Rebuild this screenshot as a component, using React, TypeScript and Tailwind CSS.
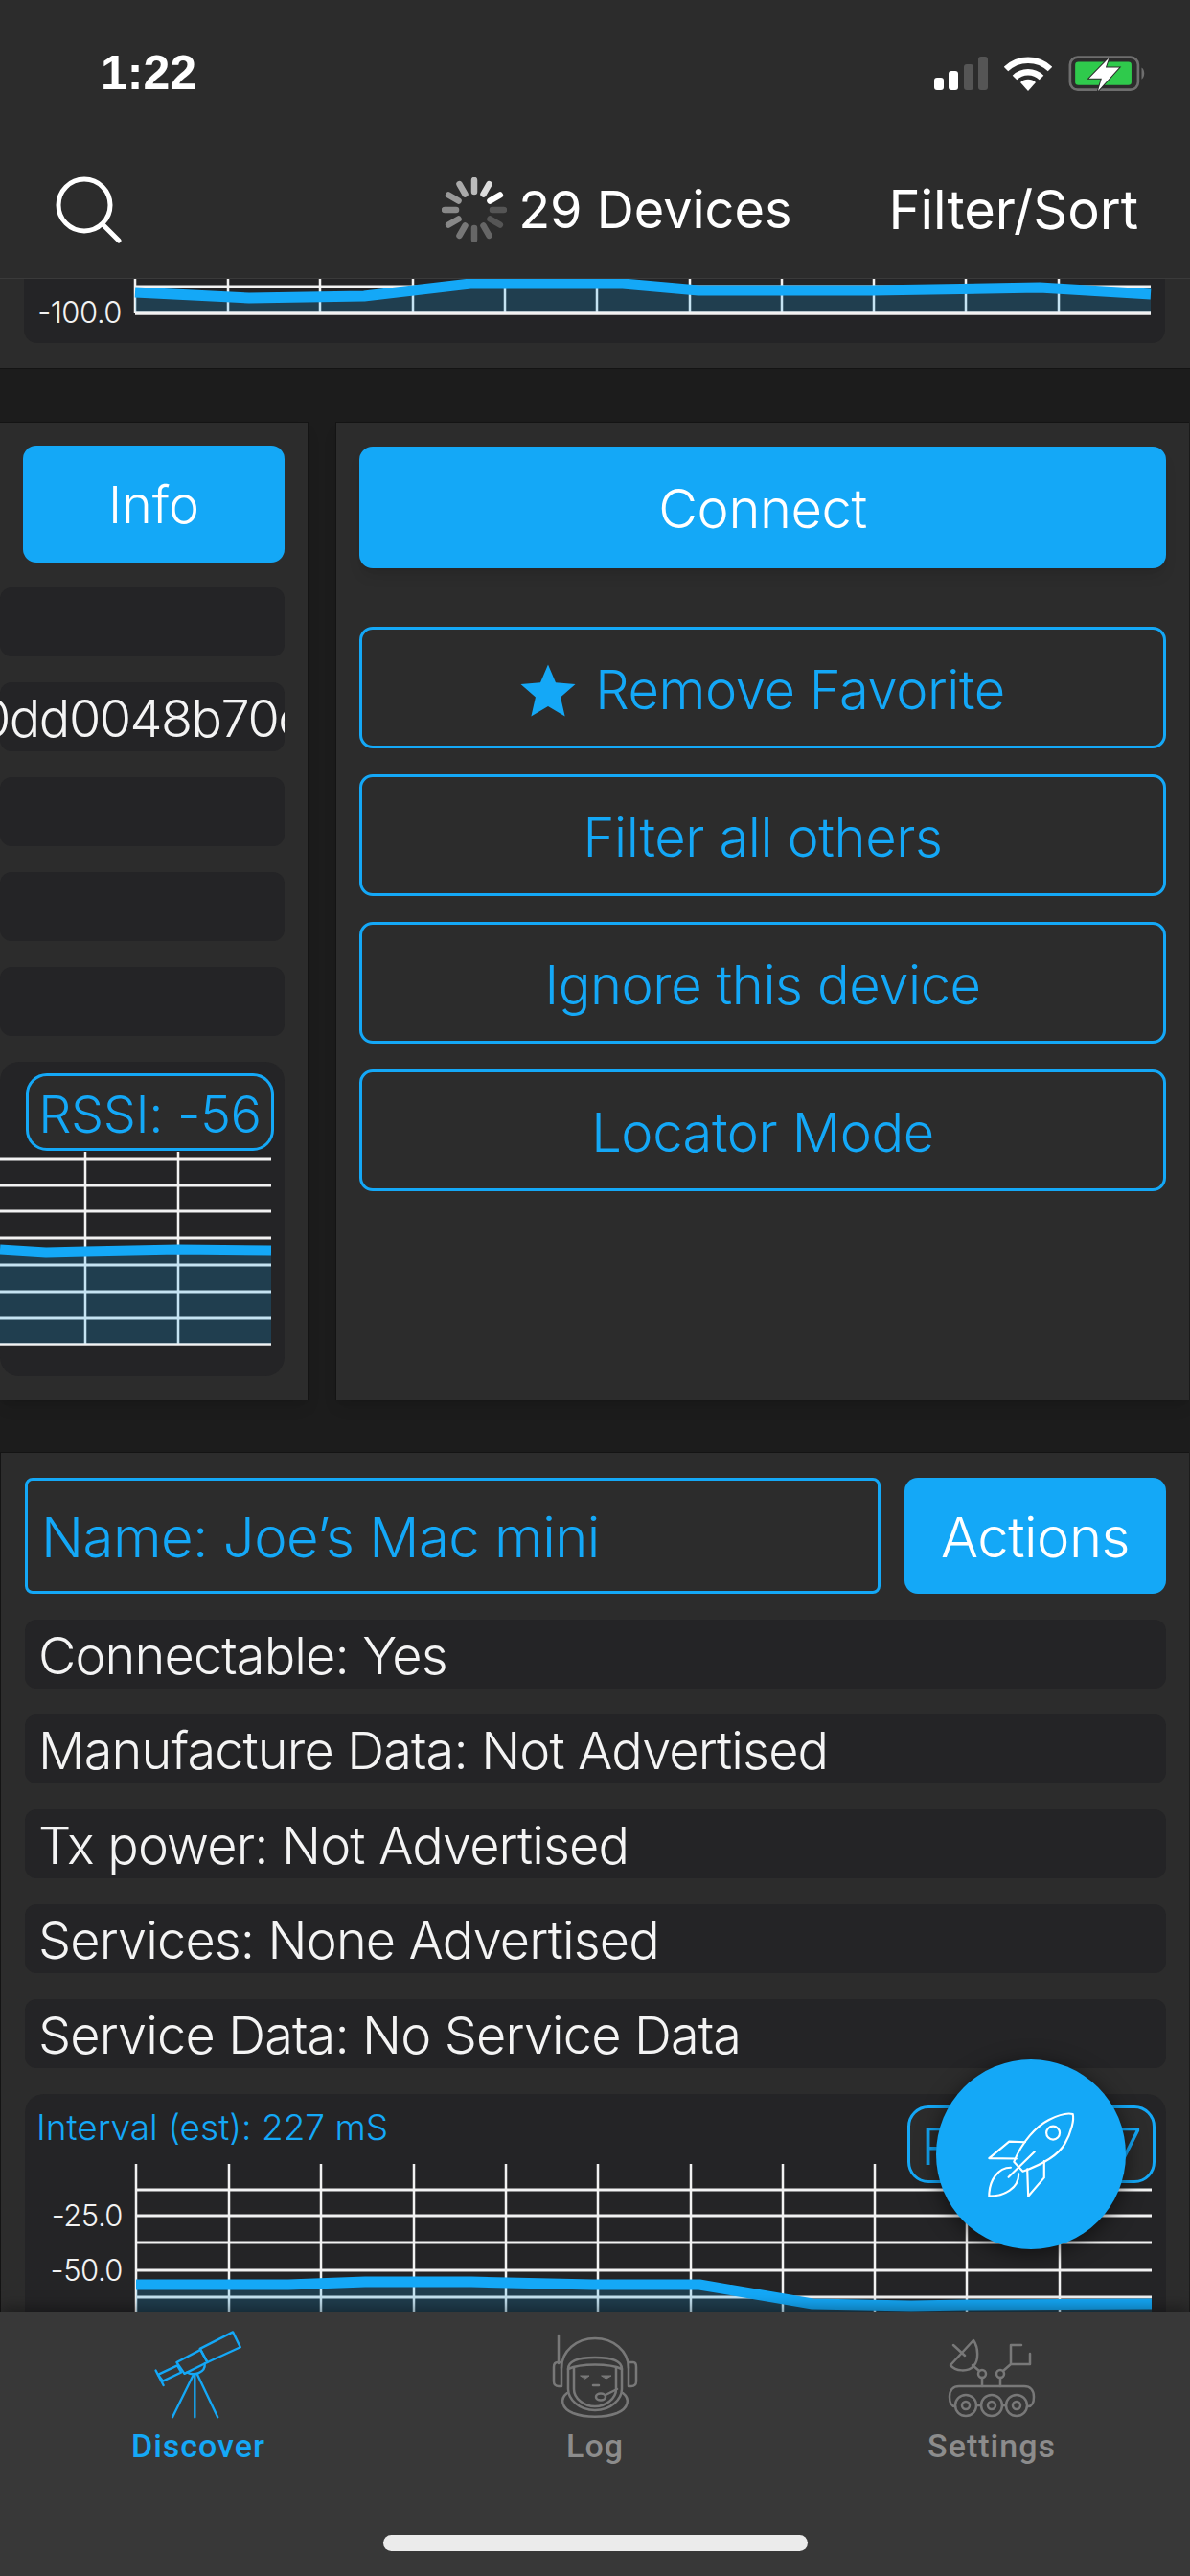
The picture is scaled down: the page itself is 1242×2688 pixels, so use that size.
import React from 'react';

type Pt = [number, number];

const VLINES = [141, 238, 334, 431, 527, 623, 720, 816, 912, 1008, 1105];

function Chart({ box, xs, ys, left, right, top, base, line, labels }: {
    box: [number, number, number, number];
    xs: number[];
    ys: number[];
    left: number;
    right: number;
    top: number;
    base: number;
    line: Pt[];
    labels?: { y: number; text: string }[];
}) {
    const pts = line.map((p) => p.join(',')).join(' ');
    const area = `${line[0][0]},${base} ${pts} ${line[line.length - 1][0]},${base}`;
    return (
        <svg className="block w-full" viewBox={box.join(' ')} style={{ height: box[3] }}>
            <g stroke="#f2f2f2" strokeWidth="3">
                {xs.map((x) => <line key={x} x1={x} x2={x} y1={top} y2={base} strokeWidth="2.5" />)}
                {ys.map((y) => <line key={y} x1={left} x2={right} y1={y} y2={y} />)}
            </g>
            <polygon points={area} fill="#14a8f7" fillOpacity="0.2" />
            <line x1={left} x2={right} y1={base} y2={base} stroke="#f2f2f2" strokeWidth="3" />
            <polyline points={pts} fill="none" stroke="#14a8f7" strokeWidth="11" strokeLinejoin="round" />
            {labels?.map((l) => (
                <text key={l.text} x="127" y={l.y + 11} textAnchor="end" fill="#f2f2f2" fontSize="31" fontFamily="Inter, sans-serif" fontWeight="300" letterSpacing="-0.5">{l.text}</text>
            ))}
        </svg>
    );
}

function Row({ children }: { children?: React.ReactNode }) {
    return (
        <div className="flex h-[72px] items-center overflow-hidden rounded-[12px] bg-[#242426] pt-[3px] pl-[14px] whitespace-nowrap text-[#f4f4f4]">
            {children}
        </div>
    );
}

function OutlineButton({ children }: { children: React.ReactNode }) {
    return (
        <div className="flex h-[127px] items-center justify-center rounded-[14px] border-[3px] border-[#14a8f7] pt-[5px] text-[#14a8f7]">
            {children}
        </div>
    );
}

function Pill({ children }: { children: React.ReactNode }) {
    return (
        <div className="absolute top-[12px] right-[11px] flex h-[81px] w-[259px] items-center justify-center rounded-[22px] border-[3px] border-[#14a8f7] bg-[#2c2c2c] pt-[3px] text-[54px] tracking-[-0.4px] whitespace-nowrap text-[#14a8f7]">
            {children}
        </div>
    );
}

function Spinner() {
    const shades = ['#bbb', '#ddd', '#fff', '#555', '#555', '#666', '#666', '#777', '#888', '#888', '#999', '#aaa'];
    return (
        <svg width="68" height="68" viewBox="-34 -34 68 68">
            {shades.map((c, i) => (
                <line key={i} x1="0" x2="0" y1="-19" y2="-31" stroke={c} strokeWidth="6.5" strokeLinecap="round" transform={`rotate(${i * 30})`} />
            ))}
        </svg>
    );
}

function StatusIcons() {
    return (
        <div className="flex items-end">
            <svg width="56" height="36" viewBox="0 0 56 36">
                <rect x="0" y="22" width="10" height="13" rx="3" fill="#fff" />
                <rect x="15" y="15" width="10" height="20" rx="3" fill="#fff" />
                <rect x="31" y="8" width="10" height="27" rx="3" fill="#555" />
                <rect x="46" y="0" width="10" height="35" rx="3" fill="#555" />
            </svg>
            <svg className="ml-[17px]" width="50" height="36" viewBox="0 0 50 36" fill="none" stroke="#fff" strokeWidth="6.5">
                <path d="M2 13A33 33 0 0 1 48 13" />
                <path d="M11 22A20 20 0 0 1 39 22" />
                <path d="M17 27A11.500 11.500 0 0 1 33 27L25 36Z" fill="#fff" stroke="none" />
            </svg>
            <svg className="ml-[17px]" width="83" height="37" viewBox="640 80 250 112">
                <rect x="645" y="85" width="215" height="103" rx="24" fill="none" stroke="#6e6e6e" strokeWidth="8" />
                <rect x="661" y="100" width="178" height="73" rx="10" fill="#2fca4c" />
                <path d="M871 118C882 124 882 148 871 155Z" fill="#6e6e6e" />
                <path d="M767 88L705 152H745L733 192L800 118H757Z" fill="#fff" stroke="#2c2c2c" strokeWidth="6" paintOrder="stroke" />
            </svg>
        </div>
    );
}

function Telescope() {
    return (
        <svg width="100" height="96" viewBox="170 90 290 285" fill="none" stroke="#14a8f7" strokeWidth="7" strokeLinecap="round" strokeLinejoin="round">
            <path d="M320 155L422 103L445 150L343 197Z" />
            <path d="M248 197L322 158L343 197L272 232Z" />
            <path d="M190 235L250 207L262 228L205 255Z" />
            <path d="M183 222L207 268" />
            <path d="M280 228C300 240 338 230 335 200" />
            <path d="M300 235L235 367M304 235V367M312 235L375 367" />
        </svg>
    );
}

function Astronaut() {
    return (
        <svg width="90" height="90" viewBox="0 0 90 90" fill="none" stroke="#787878" strokeWidth="2.500" strokeLinecap="round" strokeLinejoin="round">
            <path d="M7 2V31" />
            <path d="M10 36C10 18 26 5 45 5C64 5 80 18 80 36" />
            <path d="M10 30H6C3 30 2 32 2 35V50C2 53 4 55 7 55H10V30Z" />
            <path d="M80 30H85C87 30 88 32 88 35V50C88 53 86 55 83 55H80V30Z" />
            <path d="M17 37C17 30 25 25 45 25C65 25 73 30 73 37C60 31 30 31 17 37Z" />
            <path d="M17 37V58C17 68 28 80 45 80C62 80 73 68 73 58V37" />
            <path d="M23 36V58C23 68 34 76 45 76C56 76 67 68 67 58V36" />
            <path d="M16 62C8 68 10 78 22 83C35 88 55 88 68 83C80 78 82 68 74 62" />
            <path d="M30 44H39L35 47ZM52 44H62L57 47Z" fill="#787878" strokeWidth="1" />
            <path d="M43 54H49" />
            <ellipse cx="51" cy="66" rx="5" ry="3.500" />
            <path d="M56 64L68 58" />
        </svg>
    );
}

function Rover() {
    return (
        <svg width="96" height="86" viewBox="0 0 96 86" fill="none" stroke="#787878" strokeWidth="2.500" strokeLinecap="round" strokeLinejoin="round">
            <path d="M29 3L5 29C10 36 24 36 29 30C35 24 34 10 29 3Z" />
            <path d="M8 8L20 19M28 29L35 35" />
            <circle cx="38" cy="38" r="4" />
            <circle cx="57" cy="38" r="4" />
            <path d="M38 42V51M57 42V51" />
            <path d="M60 35L68 28V8H79M68 28H88V17" />
            <path d="M10 72C5 72 4 68 4 62C4 55 8 51 14 51H82C88 51 92 55 92 62C92 68 91 72 86 72" />
            {[21, 48, 74].map((x) => (
                <g key={x}>
                    <circle cx={x} cy="71" r="11" />
                    <circle cx={x} cy="71" r="4" />
                </g>
            ))}
            <path d="M32 71H37M59 71H63" />
        </svg>
    );
}

function Rocket() {
    return (
        <svg width="93" height="93" viewBox="265 250 280 280" fill="none" stroke="#fff" strokeWidth="6.500" strokeLinejoin="round" strokeLinecap="round">
            <path d="M350 412C375 350 420 300 460 280C490 265 520 258 535 262C540 280 530 320 510 355C490 390 440 420 378 442Z" />
            <circle cx="473" cy="321" r="21" />
            <path d="M385 350L335 348L272 401L358 402" />
            <path d="M445 410V462L395 520L392 435" />
            <path d="M340 430C300 430 272 470 272 520C320 520 365 495 365 450" />
            <path d="M333 460L415 380" />
        </svg>
    );
}

function Tab({ label, active, children }: { label: string; active?: boolean; children: React.ReactNode }) {
    return (
        <div className="flex flex-1 flex-col items-center">
            <div className="flex h-[112px] items-end">{children}</div>
            <div className={`mt-[7px] text-[34px] leading-[40px] font-medium tracking-[1px] ${active ? 'text-[#14a8f7]' : 'text-[#8c8c8c]'}`}>{label}</div>
        </div>
    );
}

export default function App() {
    return (
        <div
            className="relative flex h-[2688px] w-[1242px] flex-col overflow-hidden bg-[#1c1c1c] font-light"
            style={{ fontFamily: 'Inter, "Liberation Sans", sans-serif' }}
        >
            {/* Header */}
            <div className="z-10 flex h-[291px] shrink-0 flex-col border-b border-[#3a3a3a] bg-[#2c2c2c] text-white">
                <div className="flex h-[152px] items-center justify-between pr-[44px] pl-[105px]">
                    <div className="text-[50px] leading-none font-semibold" style={{ fontFamily: '"Liberation Sans", sans-serif' }}>1:22</div>
                    <StatusIcons />
                </div>
                <div className="flex items-center pt-[32px] pr-[54px] pl-[58px]">
                    <svg width="70" height="70" viewBox="0 0 70 70" fill="none" stroke="#fff" strokeWidth="5" strokeLinecap="round">
                        <circle cx="30" cy="30" r="27" />
                        <path d="M49 50L66 67" />
                    </svg>
                    <div className="ml-auto flex items-center">
                        <Spinner />
                        <div className="ml-[12px] text-[54px] leading-none font-normal">29 Devices</div>
                    </div>
                    <div className="ml-[101px] text-[56px] leading-none font-normal">Filter/Sort</div>
                </div>
            </div>

            {/* Scrolled device cards */}
            <div className="min-h-0 flex-1 overflow-hidden">
                <div className="h-[94px] border-b border-[#141414] bg-[#2c2c2c] pr-[26px] pl-[25px]">
                    <div className="h-[67px] overflow-hidden rounded-b-[14px] bg-[#242426]">
                        <Chart
                            box={[25, 291, 1191, 67]}
                            xs={VLINES}
                            ys={[299, 327]}
                            left={141}
                            right={1201}
                            top={291}
                            base={327}
                            line={[[141, 305], [260, 311], [380, 309], [491, 296], [650, 296], [729, 303], [911, 303], [1085, 300], [1201, 307]]}
                            labels={[{ y: 326, text: '-100.0' }]}
                        />
                    </div>
                </div>

                <div className="mt-[55px] flex h-[1021px] gap-[28px]">
                    {/* Left page, cut off by the pager */}
                    <div className="flex w-[322px] shrink-0 flex-col gap-[27px] border-t border-r border-[#141414] bg-[#2c2c2c] pt-[24px] pr-[24px] shadow-lg">
                        <div className="-mb-px flex justify-end">
                            <div className="flex h-[122px] w-[273px] items-center justify-center rounded-[14px] bg-[#14a8f7] text-[54px] text-white">Info</div>
                        </div>
                        <Row />
                        <div className="flex h-[72px] items-center overflow-hidden rounded-[12px] bg-[#242426] pt-[3px] text-[54px] tracking-[-1.5px] text-[#f4f4f4]">
                            <span className="-ml-[22px] shrink-0 whitespace-nowrap">0dd0048b70c0</span>
                        </div>
                        <Row />
                        <Row />
                        <Row />
                        <div className="relative h-[328px] overflow-hidden rounded-[20px] bg-[#242426]">
                            <Chart
                                box={[0, 1108, 297, 328]}
                                xs={[89, 186]}
                                ys={[1209, 1237, 1264, 1292, 1320, 1348, 1375, 1403]}
                                left={0}
                                right={283}
                                top={1202}
                                base={1403}
                                line={[[0, 1304], [48, 1307], [89, 1306], [186, 1304], [283, 1305]]}
                            />
                            <Pill>RSSI: -56</Pill>
                        </div>
                    </div>

                    {/* Actions page */}
                    <div className="mr-px flex flex-1 flex-col border-t border-l border-[#141414] bg-[#2c2c2c] pt-[25px] pr-[24px] pl-[24px] text-[56px] tracking-[-0.4px] shadow-lg">
                        <div className="flex h-[127px] items-center justify-center rounded-[14px] bg-[#14a8f7] pt-[3px] text-white shadow-lg">Connect</div>
                        <div className="mt-[61px] flex flex-col gap-[27px]">
                            <OutlineButton>
                                <svg className="mr-[20px]" width="58" height="56" viewBox="0 0 24 23" fill="#14a8f7">
                                    <path d="M12 0.500L15.300 8.300L23.800 9L17.400 14.600L19.300 22.900L12 18.500L4.700 22.900L6.600 14.600L0.200 9L8.700 8.300Z" />
                                </svg>
                                Remove Favorite
                            </OutlineButton>
                            <OutlineButton>Filter all others</OutlineButton>
                            <OutlineButton>Ignore this device</OutlineButton>
                            <OutlineButton>Locator Mode</OutlineButton>
                        </div>
                    </div>
                </div>

                <div className="mt-[54px] mr-px flex flex-col gap-[27px] border-t border-l border-[#141414] bg-[#2c2c2c] pt-[26px] pr-[24px] pl-[25px] text-[54px] tracking-[-0.85px]">
                    <div className="flex gap-[25px] text-[58px] tracking-[-0.5px]">
                        <div className="flex h-[121px] flex-1 items-center rounded-[8px] border-[3px] border-[#14a8f7] pt-[3px] pl-[14px] text-[#14a8f7]">Name: Joe’s Mac mini</div>
                        <div className="flex h-[121px] w-[273px] items-center justify-center rounded-[14px] bg-[#14a8f7] pt-[3px] text-white">Actions</div>
                    </div>
                    <Row>Connectable: Yes</Row>
                    <Row>Manufacture Data: Not Advertised</Row>
                    <Row>Tx power: Not Advertised</Row>
                    <Row>Services: None Advertised</Row>
                    <Row>Service Data: No Service Data</Row>
                    <div className="relative h-[330px] overflow-hidden rounded-t-[20px] bg-[#242426]">
                        <Chart
                            box={[25, 2185, 1191, 330]}
                            xs={VLINES}
                            ys={[2285, 2312, 2340, 2369, 2397, 2425, 2453, 2481]}
                            left={141}
                            right={1201}
                            top={2258}
                            base={2481}
                            line={[[141, 2384], [300, 2384], [380, 2381], [491, 2381], [618, 2384], [729, 2384], [847, 2404], [950, 2406], [1008, 2405], [1201, 2404]]}
                            labels={[{ y: 2312, text: '-25.0' }, { y: 2369, text: '-50.0' }, { y: 2425, text: '-75.0' }]}
                        />
                        <div className="absolute top-[13px] left-[12px] text-[37px] leading-[44px] tracking-normal text-[#14a8f7]">Interval (est): 227 mS</div>
                        <Pill>RSSI: -57</Pill>
                    </div>
                </div>
            </div>

            {/* Tab bar */}
            <div className="z-10 flex h-[275px] shrink-0 flex-col bg-[#383838] shadow-[0_-6px_14px_rgba(0,0,0,0.35)]" style={{ fontFamily: 'Roboto, sans-serif' }}>
                <div className="flex">
                    <Tab label="Discover" active><Telescope /></Tab>
                    <Tab label="Log"><Astronaut /></Tab>
                    <Tab label="Settings"><Rover /></Tab>
                </div>
                <div className="mt-auto mb-[26px] h-[17px] w-[443px] self-center rounded-full bg-[#ebebeb]" />
            </div>

            {/* Floating action button */}
            <div className="absolute top-[2149px] left-[977px] z-20 flex h-[198px] w-[198px] items-center justify-center rounded-full bg-[#14a8f7] shadow-[0_4px_22px_rgba(0,0,0,0.55)]">
                <Rocket />
            </div>
        </div>
    );
}
